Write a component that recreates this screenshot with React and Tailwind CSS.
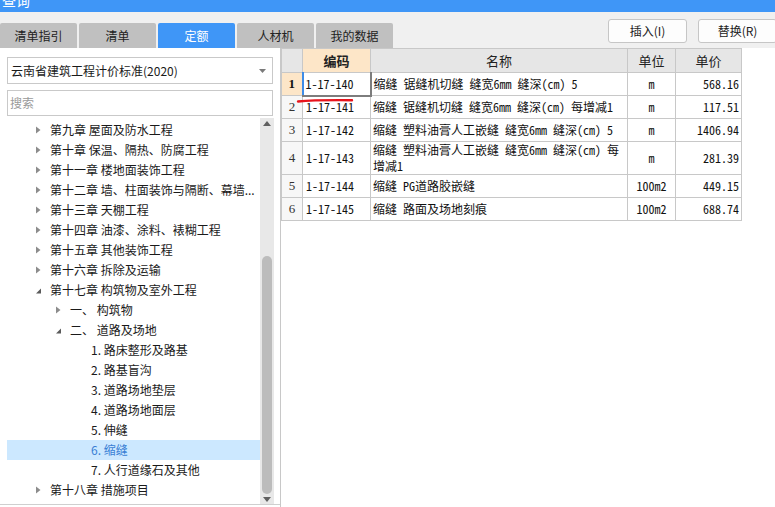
import { memo } from "react";

const ui = "font-['Microsoft_YaHei','Noto_Sans_CJK_SC',sans-serif]";
const mono = "font-['Noto_Sans_Mono_CJK_SC','Noto_Sans_CJK_SC',monospace]";

const tabs = [
  { label: "清单指引", active: false },
  { label: "清单", active: false },
  { label: "定额", active: true },
  { label: "人材机", active: false },
  { label: "我的数据", active: false },
];

const tree = [
  { level: 1, arrow: "c", text: "第九章 屋面及防水工程" },
  { level: 1, arrow: "c", text: "第十章 保温、隔热、防腐工程" },
  { level: 1, arrow: "c", text: "第十一章 楼地面装饰工程" },
  { level: 1, arrow: "c", text: "第十二章 墙、柱面装饰与隔断、幕墙..." },
  { level: 1, arrow: "c", text: "第十三章 天棚工程" },
  { level: 1, arrow: "c", text: "第十四章 油漆、涂料、裱糊工程" },
  { level: 1, arrow: "c", text: "第十五章 其他装饰工程" },
  { level: 1, arrow: "c", text: "第十六章 拆除及运输" },
  { level: 1, arrow: "e", text: "第十七章 构筑物及室外工程" },
  { level: 2, arrow: "c", text: "一、 构筑物" },
  { level: 2, arrow: "e", text: "二、 道路及场地" },
  { level: 3, text: "1. 路床整形及路基" },
  { level: 3, text: "2. 路基盲沟" },
  { level: 3, text: "3. 道路场地垫层" },
  { level: 3, text: "4. 道路场地面层" },
  { level: 3, text: "5. 伸缝" },
  { level: 3, text: "6. 缩缝", selected: true },
  { level: 3, text: "7. 人行道缘石及其他" },
  { level: 1, arrow: "c", text: "第十八章 措施项目" },
];

const rows = [
  { n: 1, code: "1-17-140", name: ["缩缝 锯缝机切缝 缝宽6mm 缝深(cm) 5"], unit: "m", price: "568.16" },
  { n: 2, code: "1-17-141", name: ["缩缝 锯缝机切缝 缝宽6mm 缝深(cm) 每增减1"], unit: "m", price: "117.51" },
  { n: 3, code: "1-17-142", name: ["缩缝 塑料油膏人工嵌缝 缝宽6mm 缝深(cm) 5"], unit: "m", price: "1406.94" },
  { n: 4, code: "1-17-143", name: ["缩缝 塑料油膏人工嵌缝 缝宽6mm 缝深(cm) 每", "增减1"], unit: "m", price: "281.39", tall: true },
  { n: 5, code: "1-17-144", name: ["缩缝 PG道路胶嵌缝"], unit: "100m2", price: "449.15" },
  { n: 6, code: "1-17-145", name: ["缩缝 路面及场地刻痕"], unit: "100m2", price: "688.74" },
];

const padByLevel = { 1: "pl-[28px]", 2: "pl-[48px]", 3: "pl-[84px]" };

const Arrow = ({ type }) =>
  type === "e" ? (
    <svg width="15" height="20" viewBox="0 0 15 20">
      <path d="M1 13.5 L6 13.5 L6 8.5 Z" fill="#5a5a5a" />
    </svg>
  ) : (
    <svg width="15" height="20" viewBox="0 0 15 20">
      <path d="M1 6.5 L5.5 10 L1 13.5 Z" fill="#8c8c8c" />
    </svg>
  );

const TreeRow = memo(({ item }) => (
  <div
    className={`flex h-[20px] items-center whitespace-nowrap overflow-hidden ${padByLevel[item.level]} ${
      item.selected ? "bg-[#cce8ff] text-[#3a7fd5]" : "text-[#1a1a1a]"
    }`}
  >
    {item.arrow && <Arrow type={item.arrow} />}
    <span className="text-[12px] leading-[20px]">{item.text}</span>
  </div>
));
TreeRow.displayName = "TreeRow";

export default function App() {
  return (
    <div className={`relative w-[775px] h-[507px] overflow-hidden bg-[#f0f0f0] ${ui}`}>
      {/* title bar, cut off at the top */}
      <div className="h-[12px] bg-[#3f96f7] overflow-hidden">
        <div className="text-white text-[14px] leading-[16px] mt-[-8px] ml-[2px]">查询</div>
      </div>

      {/* tabs + buttons */}
      <div className="flex h-[36px]">
        <div className="flex items-end gap-[2px]">
          {tabs.map((t) => (
            <div
              key={t.label}
              className={`w-[77px] h-[25px] rounded-t-[2px] flex items-center justify-center text-[12px] ${
                t.active ? "bg-[#3f96f7] text-white" : "bg-[#c0c0c0] text-[#222]"
              }`}
            >
              {t.label}
            </div>
          ))}
        </div>
        <div className="ml-auto flex gap-[11px] pt-[7px]">
          <button className="w-[79px] h-[24px] bg-[#fdfdfd] border border-[#c6c6c6] rounded-[3px] text-[12px] text-[#222]">
            插入(I)
          </button>
          <button className="w-[79px] h-[24px] bg-[#fdfdfd] border border-[#c6c6c6] rounded-[3px] text-[12px] text-[#222] mr-[-2px]">
            替换(R)
          </button>
        </div>
      </div>

      <div className="flex h-[459px]">
        {/* left panel */}
        <div className="w-[281px] bg-white border-r border-[#c8c8c8] flex flex-col">
          <div className="mt-[9px] mx-[7px] h-[27px] border border-[#c9c9c9] flex items-center pl-[3px] pr-[6px]">
            <span className="text-[12px] text-[#1a1a1a]">云南省建筑工程计价标准(2020)</span>
            <svg className="ml-auto" width="7" height="4" viewBox="0 0 7 4">
              <path d="M0 0 L7 0 L3.5 4 Z" fill="#7a7a7a" />
            </svg>
          </div>
          <div className="mt-[6px] mx-[7px] h-[26px] border border-[#c9c9c9] flex items-center pl-[2px]">
            <span className="text-[12px] text-[#9a9a9a]">搜索</span>
          </div>
          <div className="mt-[2px] flex h-[387px] pl-[7px] border-b border-[#cfcfcf]">
            <div className="w-[253px] pt-[2px]">
              {tree.map((item, i) => (
                <TreeRow key={i} item={item} />
              ))}
            </div>
            <div className="w-[14px] bg-[#e8e8e8] flex flex-col items-center">
              <svg className="mt-[3px]" width="8" height="5" viewBox="0 0 8 5">
                <path d="M0 5 L8 5 L4 0 Z" fill="#606060" />
              </svg>
              <div className="mt-[130px] w-[10px] h-[238px] rounded-[5px] bg-[#bcbcbc]" />
              <svg className="mt-[3px]" width="8" height="5" viewBox="0 0 8 5">
                <path d="M0 0 L8 0 L4 5 Z" fill="#606060" />
              </svg>
            </div>
          </div>
        </div>

        {/* right panel / table */}
        <div className="flex-1 bg-white">
          <table className={`border-collapse table-fixed text-[12px] text-[#111] ${mono}`}>
            <colgroup>
              <col className="w-[21px]" />
              <col className="w-[68px]" />
              <col className="w-[257px]" />
              <col className="w-[48px]" />
              <col className="w-[66px]" />
            </colgroup>
            <thead>
              <tr className={`h-[24px] ${ui} text-[13px]`}>
                <th className="border border-[#c8c8c8] bg-[#e6e6e6]" />
                <th className="border border-[#c8c8c8] bg-[#fde6c8] font-bold text-[#222]">编码</th>
                <th className="border border-[#c8c8c8] bg-[#e6e6e6] font-normal text-[#222]">名称</th>
                <th className="border border-[#c8c8c8] bg-[#e6e6e6] font-normal text-[#222]">单位</th>
                <th className="border border-[#c8c8c8] bg-[#e6e6e6] font-normal text-[#222]">单价</th>
              </tr>
            </thead>
            <tbody>
              {rows.map((r) => (
                <tr key={r.n} className={r.tall ? "h-[33px]" : "h-[23px]"}>
                  <td
                    className={`border border-[#c8c8c8] text-center font-['Liberation_Serif',serif] text-[13px] ${
                      r.n === 1 ? "bg-[#fde6c8] font-bold" : "bg-[#f7f7f7] text-[#333]"
                    }`}
                  >
                    {r.n}
                  </td>
                  <td
                    className={
                      r.n === 1
                        ? "border border-[#c8c8c8] border-l-2 border-l-[#3d8ce8] border-r-2 border-r-[#7d7d7d] border-b-2 border-b-[#7d7d7d] pl-[2px]"
                        : "border border-[#c8c8c8] pl-[3px]"
                    }
                  >
                    {r.code}
                  </td>
                  <td className="border border-[#c8c8c8] pl-[2px] leading-[16px] whitespace-nowrap overflow-hidden">
                    {r.name.map((line, i) => (
                      <div key={i}>{line}</div>
                    ))}
                  </td>
                  <td className="border border-[#c8c8c8] text-center">{r.unit}</td>
                  <td className="border border-[#c8c8c8] text-right pr-[2px]">{r.price}</td>
                </tr>
              ))}
            </tbody>
          </table>
        </div>
      </div>

      {/* red hand-drawn mark under the selected code */}
      <svg className="absolute left-[296px] top-[97px]" width="60" height="7" viewBox="0 0 60 7">
        <path d="M2 4.5 C 15 3.2, 35 3, 56 3.2" stroke="#e8141c" strokeWidth="2.4" fill="none" strokeLinecap="round" />
      </svg>
    </div>
  );
}
